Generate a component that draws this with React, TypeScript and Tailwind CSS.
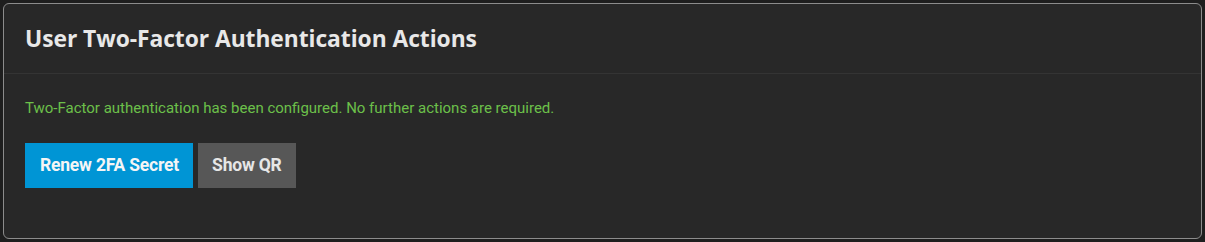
export default function App() {
  return (
    <div className="min-h-[242px] w-[1205px] bg-[#1e1e1e] p-[3px]">
      <div className="h-[236px] rounded-[6px] border border-[#8c8c8c] bg-[#282828]">
        <div className="border-b border-[#343434] px-[21px] pb-[20px] pt-[21px]">
          <h3 className="text-[22.8px] font-bold leading-[28px] tracking-[-0.05px] text-[#e8e8e8] [font-family:'Open_Sans',sans-serif]">
            User Two-Factor Authentication Actions
          </h3>
        </div>
        <div className="px-[21px] pt-[24px]">
          <p className="text-[15px] leading-[20px] text-[#6cc04a] [font-family:Roboto,sans-serif]">
            Two-Factor authentication has been configured. No further actions are required.
          </p>
          <div className="mt-[25px] flex gap-[5px] [font-family:Roboto,sans-serif]">
            <button className="h-[45px] bg-[#0095d5] pl-[15px] pr-[14px] text-[17.5px] font-bold tracking-[-0.2px] text-[#f5f5f5]">
              Renew 2FA Secret
            </button>
            <button className="h-[45px] bg-[#575757] px-[14px] text-[17.5px] font-bold tracking-[-0.2px] text-[#e6e6e6]">
              Show QR
            </button>
          </div>
        </div>
      </div>
    </div>
  );
}
